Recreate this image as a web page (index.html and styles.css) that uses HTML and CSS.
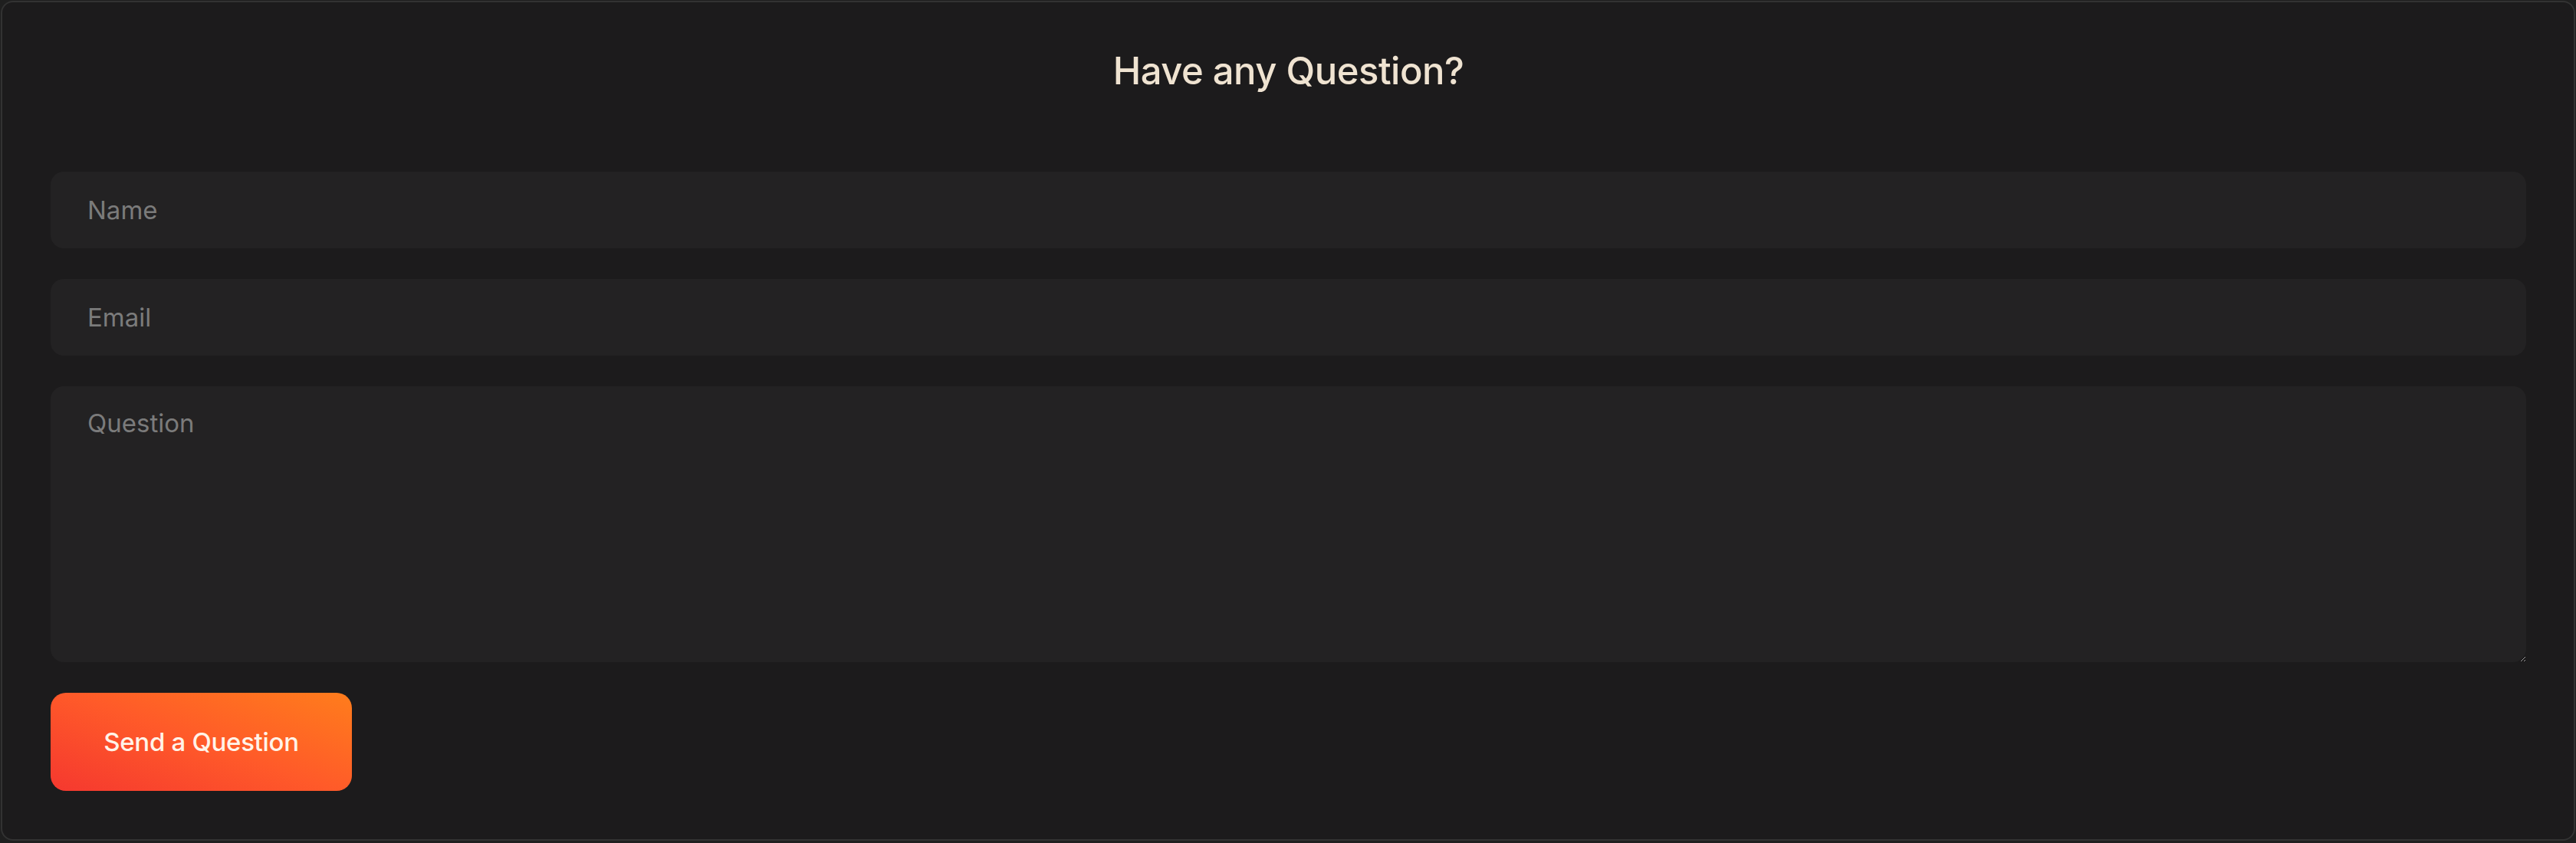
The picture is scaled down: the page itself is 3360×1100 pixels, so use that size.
FILE: index.html
```html
<!DOCTYPE html>
<html lang="en">
<head>
<meta charset="utf-8">
<title>Have any Question?</title>
<link rel="stylesheet" href="styles.css">
</head>
<body>
<section class="card">
  <h2 class="title">Have any Question?</h2>
  <form class="form">
    <input class="field" type="text" placeholder="Name">
    <input class="field" type="email" placeholder="Email">
    <textarea class="field area" placeholder="Question"></textarea>
    <div class="actions">
      <button class="btn" type="button">Send a Question</button>
    </div>
  </form>
</section>
</body>
</html>
```

FILE: styles.css
```css
html, body {
  margin: 0;
  padding: 0;
  background: #1f1f1f;
  color-scheme: dark;
}
body {
  font-family: Inter, "Noto Sans", sans-serif;
}
.card {
  margin: 1px;
  height: 1092px;
  border: 2px solid #323232;
  border-radius: 16px;
  background: #1c1b1c;
  padding: 0 62px 0 63px;
  box-sizing: content-box;
}
.title {
  margin: 0;
  padding-top: 60px;
  height: 221px;
  box-sizing: border-box;
  text-align: center;
  font-size: 49px;
  line-height: 60px;
  font-weight: 500;
  color: #efe3d1;
  letter-spacing: -0.5px;
}
.form {
  display: flex;
  flex-direction: column;
  gap: 40px;
}
.field {
  display: block;
  box-sizing: border-box;
  width: 100%;
  height: 100px;
  border: none;
  outline: none;
  border-radius: 17px;
  background: #232223;
  padding: 0 48px;
  font-family: inherit;
  font-size: 33px;
  color: #cfcfcf;
}
.field::placeholder {
  color: #7b7b7b;
}
.area {
  height: 360px;
  padding-top: 26px;
  line-height: 44px;
  resize: vertical;
}
.actions {
  display: flex;
}
.btn {
  width: 393px;
  height: 128px;
  border: none;
  border-radius: 20px;
  background: linear-gradient(20deg, #f5382f 0%, #ff5a29 50%, #ff7d1c 100%);
  color: #fff3e8;
  font-family: inherit;
  font-size: 33px;
  font-weight: 500;
  letter-spacing: -0.3px;
  cursor: pointer;
}
```
